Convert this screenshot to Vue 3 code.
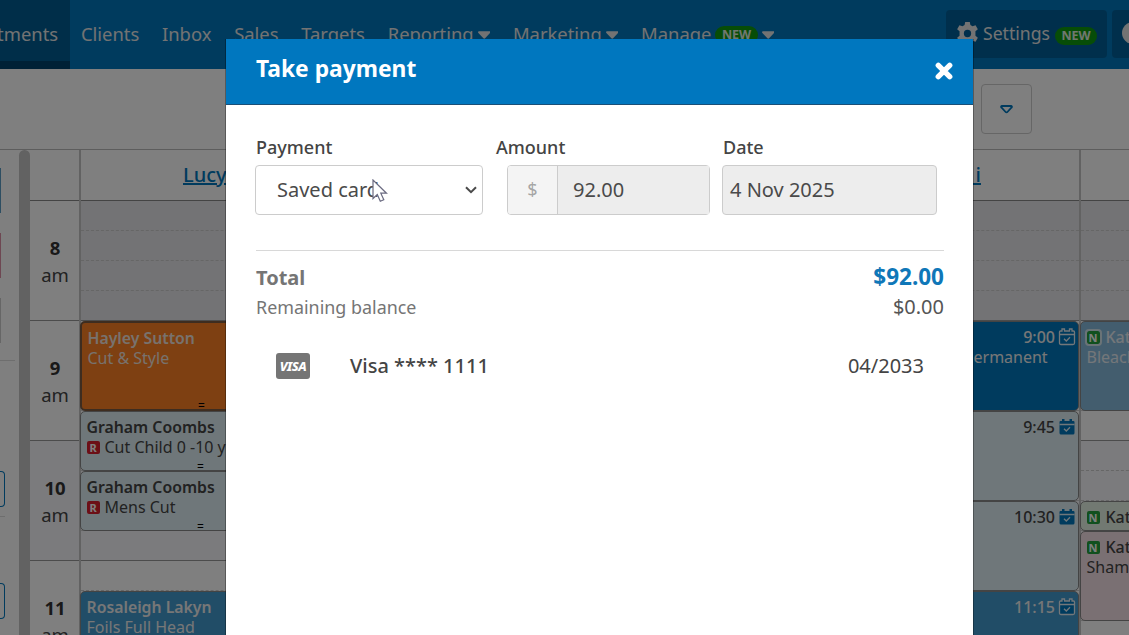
<!-- App.vue -->
<template>
  <div class="page">
    <!-- top navigation -->
    <header class="navbar">
      <nav class="menu">
        <a class="menu-item active"><span>Appointments</span></a>
        <a v-for="item in menu" :key="item.label" class="menu-item">
          <span>{{ item.label }}</span>
          <span v-if="item.isNew" class="badge">NEW</span>
          <svg v-if="item.caret" class="caret" viewBox="0 0 13 8">
            <path d="M1.2 0h10.6c1 0 1.5 1.1.8 1.9L7.4 7.4c-.5.6-1.3.6-1.8 0L.4 1.9C-.3 1.1.2 0 1.2 0z" fill="currentColor" />
          </svg>
        </a>
      </nav>
      <div class="nav-buttons">
        <a class="nav-button settings">
          <svg class="gear" viewBox="0 0 22 22">
            <path fill="currentColor" fill-rule="evenodd"
              d="M8.8 0h4.4l.6 2.9 2 1.2 2.9-1 2.200 3.800-2.300 2v4.200l2.300 2-2.200 3.800-2.900-1-2 1.200-.6 2.900H8.800l-.6-2.900-2-1.200-2.900 1-2.200-3.800 2.300-2V8.900l-2.300-2 2.200-3.800 2.900 1 2-1.200zM11 7.500a3.500 3.500 0 1 0 0 7 3.500 3.500 0 0 0 0-7z" />
          </svg>
          <span>Settings</span>
          <span class="badge">NEW</span>
        </a>
        <a class="nav-button help"><span class="circle"></span></a>
      </div>
    </header>

    <!-- toolbar -->
    <div class="toolbar">
      <button class="dropdown">
        <svg width="13" height="9" viewBox="0 0 13 9">
          <path d="M2 1h9c.9 0 1.2.9.6 1.5L7.4 7c-.5.6-1.3.6-1.8 0L1.4 2.5C.8 1.9 1.1 1 2 1z" fill="none"
            stroke="currentColor" stroke-width="1.8" />
        </svg>
      </button>
    </div>

    <!-- calendar -->
    <main class="calendar">
      <aside class="sidebar">
        <i class="edge blue"></i>
        <i class="edge pink"></i>
        <i class="edge grey"></i>
        <i class="rule"></i>
        <i class="side-button"></i>
        <i class="rule second"></i>
        <i class="side-button last"></i>
      </aside>
      <div class="scrollbar"></div>

      <section class="times">
        <div class="column-head"></div>
        <div v-for="hour in hours" :key="hour" class="hour" :class="{ shaded: hour === 10 }">
          <strong>{{ hour }}</strong>
          <span>am</span>
        </div>
      </section>

      <section v-for="col in columns" :key="col.id" class="column" :class="col.id">
        <div class="column-head"><a v-if="col.name">{{ col.name }}</a></div>
        <div class="slots">
          <div v-for="n in 16" :key="n" class="slot"
            :class="{ closed: n <= 4, shaded: n > 8 && n <= 12, full: n % 4 === 0 }" :style="{ gridRow: n }"></div>
          <article v-for="a in col.items" :key="a.row" class="appt" :class="a.color"
            :style="{ gridRow: a.row + ' / span ' + a.span }">
            <div class="line">
              <b v-if="a.tag" class="tag new" :class="{ outlined: a.outlined }">N</b>
              <strong v-if="a.client">{{ a.client }}</strong>
              <span v-if="a.time" class="time">{{ a.time }}</span>
              <svg v-if="a.time" class="cal-icon" :class="{ light: a.lightIcon }" viewBox="0 0 18 18">
                <path class="sheet" d="M2.500 3H4V1h2.500v2h5V1H14v2h1.500q1 0 1 1v11q0 1.500-1.500 1.500H3Q1.500 16.500 1.500 15V4q0-1 1-1z" />
                <path class="mark" d="M1.500 6.500h15M6 10.800l2.300 2.200 3.700-3.700" />
              </svg>
            </div>
            <div v-if="a.service" class="line service">
              <b v-if="a.repeat" class="tag repeat">R</b>
              <span>{{ a.service }}</span>
            </div>
            <span v-if="a.handle" class="handle">=</span>
          </article>
        </div>
      </section>
    </main>

    <!-- payment dialog -->
    <div class="overlay">
      <div class="modal">
        <div class="modal-head">
          <h1>Take payment</h1>
          <svg class="close" viewBox="0 0 18 18">
            <path d="M3.3 3.3l11.400 11.400M14.700 3.300L3.300 14.700" stroke="currentColor" stroke-width="5.400" stroke-linecap="round" />
          </svg>
        </div>
        <div class="modal-body">
          <div class="fields">
            <div class="field payment">
              <label>Payment</label>
              <div class="control select">
                <span>{{ payment.method }}</span>
                <svg width="12" height="8" viewBox="0 0 12 8">
                  <path d="M1 1.200l5 5 5-5" fill="none" stroke="currentColor" stroke-width="2" />
                </svg>
                <svg class="pointer" width="16" height="24" viewBox="0 0 16 24">
                  <path d="M1 1v18.500l4.300-4 3 6.800 3.500-1.600-3-6.500h5.700z" fill="#fff" stroke="#6a6a80" stroke-width="1.200" />
                </svg>
              </div>
            </div>
            <div class="field amount">
              <label>Amount</label>
              <div class="control group">
                <span class="prefix">$</span>
                <span class="value">{{ payment.amount }}</span>
              </div>
            </div>
            <div class="field date">
              <label>Date</label>
              <div class="control readonly">{{ payment.date }}</div>
            </div>
          </div>

          <div class="summary">
            <div class="row total"><span>Total</span><span class="sum">${{ payment.amount }}</span></div>
            <div class="row balance"><span>Remaining balance</span><span class="sum">$0.00</span></div>
          </div>

          <div class="card-row">
            <span class="visa">VISA</span>
            <span class="number">Visa **** 1111</span>
            <span class="expiry">04/2033</span>
          </div>
        </div>
      </div>
    </div>
  </div>
</template>

<script setup>
import { reactive } from 'vue'

const payment = reactive({ method: 'Saved card', amount: '92.00', date: '4 Nov 2025' })

const menu = [
  { label: 'Clients' },
  { label: 'Inbox' },
  { label: 'Sales' },
  { label: 'Targets' },
  { label: 'Reporting', caret: true },
  { label: 'Marketing', caret: true },
  { label: 'Manage', caret: true, isNew: true }
]

const hours = [8, 9, 10, 11]

/* one row = 15 minutes, row 1 = 8:00 */
const columns = [
  {
    id: 'first',
    name: 'Lucy',
    items: [
      { row: 5, span: 3, color: 'orange', client: 'Hayley Sutton', service: 'Cut & Style', handle: true },
      { row: 8, span: 2, color: 'pale', client: 'Graham Coombs', service: 'Cut Child 0 -10 y', repeat: true, handle: true },
      { row: 10, span: 2, color: 'pale', client: 'Graham Coombs', service: 'Mens Cut', repeat: true, handle: true },
      { row: 14, span: 3, color: 'sky', client: 'Rosaleigh Lakyn', service: 'Foils Full Head' }
    ]
  },
  { id: 'middle', items: [] },
  {
    id: 'third',
    name: '\u00a0\u00a0i',
    items: [
      { row: 5, span: 3, color: 'navy', time: '9:00', service: 'ermanent', lightIcon: true },
      { row: 8, span: 3, color: 'pale', time: '9:45' },
      { row: 11, span: 3, color: 'pale', time: '10:30' },
      { row: 14, span: 3, color: 'sky', time: '11:15', lightIcon: true }
    ]
  },
  {
    id: 'fourth',
    items: [
      { row: 5, span: 3, color: 'light-blue', client: 'Kat', service: 'Bleach', tag: true, outlined: true },
      { row: 11, span: 1, color: 'mint', client: 'Kat', tag: true },
      { row: 12, span: 3, color: 'rose', client: 'Kat', service: 'Sham', tag: true }
    ]
  }
]
</script>

<style>
body {
  margin: 0;
  overflow: hidden;
}
</style>

<style scoped>
* {
  box-sizing: border-box;
}

.page {
  width: 100vw;
  height: 100vh;
  overflow: hidden;
  background: #fff;
  color: #444;
  font-family: "Noto Sans", sans-serif;
}

/* Navigation */
.navbar {
  display: flex;
  height: 69px;
  background: #0077bd;
  color: #e6e6e6;
  font-size: 18.4px;
}

.menu {
  display: flex;
  flex: none;
  width: 946px;
}

.menu-item {
  display: flex;
  align-items: center;
  padding: 0 11.4px 2px;
  gap: 4px;
  white-space: nowrap;
}

.menu-item.active {
  width: 69.5px;
  justify-content: flex-end;
  background: #005c93;
  border-bottom: 8px solid #00436c;
  padding-top: 8px;
}

.caret {
  width: 12.5px;
  height: 8px;
  margin-top: 3px;
}

.badge {
  height: 18px;
  margin-top: 2px;
  padding: 0 6.5px;
  border-radius: 9px;
  background: #0f9a0f;
  color: #e0f0e0;
  font-size: 12.5px;
  font-weight: 700;
  line-height: 18px;
}

.nav-buttons {
  display: flex;
  flex: none;
  gap: 5px;
  padding-top: 10px;
}

.nav-button {
  display: flex;
  align-items: center;
  width: 161px;
  height: 48px;
  padding: 0 0 2px 10px;
  border-radius: 4px;
  background: #005f98;
  font-size: 17.6px;
}

.gear {
  width: 23px;
  height: 23px;
  margin-right: 4px;
}

.settings .badge {
  margin-top: 5px;
  margin-left: 5px;
}

.circle {
  width: 22px;
  height: 22px;
  border-radius: 50%;
  background: currentColor;
}

/* Toolbar */
.toolbar {
  height: 81px;
  padding: 15px 0 0 981px;
  border-bottom: 1px solid #bbb;
}

.dropdown {
  display: flex;
  align-items: center;
  justify-content: center;
  width: 51px;
  height: 50px;
  padding: 0;
  border: 1px solid #ccc;
  border-radius: 4px;
  background: #fff;
  color: #0077bd;
}

/* Calendar */
.calendar {
  display: flex;
  height: 485px;
  overflow: hidden;
}

.sidebar {
  width: 19px;
  flex: none;
}

.sidebar i {
  display: block;
}

.edge {
  width: 1px;
  height: 45px;
  margin-bottom: 20px;
}

.edge.blue {
  margin-top: 18px;
  background: #5b9cc4;
}

.edge.pink {
  background: #dc8fa5;
}

.edge.grey {
  background: #ccc;
  margin-bottom: 17px;
}

.rule {
  width: 15px;
  height: 1px;
  background: #ddd;
}

.side-button {
  width: 5px;
  height: 36px;
  margin-top: 110px;
  border: 1px solid #0077bd;
  border-left: 0;
  border-radius: 0 4px 4px 0;
}

.rule.second {
  width: 5px;
  margin-top: 9px;
}

.side-button.last {
  margin-top: 66px;
}

.scrollbar {
  width: 11px;
  flex: none;
  border-radius: 6px 6px 0 0;
  background: #c4c4c4;
}

.times {
  width: 49px;
  flex: none;
}

.column-head {
  height: 51px;
  border-bottom: 1px solid #888;
  font-size: 20px;
  font-weight: 500;
  line-height: 49px;
  white-space: nowrap;
}

.column-head a {
  color: #0077bd;
  text-decoration: underline;
}

.first .column-head {
  padding-left: 102px;
}

.third .column-head {
  padding-right: 98px;
  text-align: right;
}

.hour {
  display: flex;
  flex-direction: column;
  align-items: center;
  height: 120px;
  padding: 33px 0 0 1px;
  border-bottom: 1px solid #999;
  font-size: 18.5px;
  line-height: 28px;
}

.hour span {
  margin-top: -1px;
}

.hour strong {
  color: #333;
}

.column {
  flex: 0 0 334px;
  border-left: 2px solid #c4c4c4;
}

.column.middle {
  flex-basis: 332px;
}

.slots {
  display: grid;
  grid-template-columns: 100%;
  grid-template-rows: repeat(16, 30px);
}

.slot {
  grid-column: 1;
  border-bottom: 1px dashed #ccc;
}

.slot.closed {
  background: #e6e6ea;
}

.shaded {
  background: #f7f7fa;
}

.slot.full {
  border-bottom: 1px solid #999;
}

/* Appointments */
.appt {
  position: relative;
  z-index: 1;
  grid-column: 1;
  margin-left: -1px;
  padding: 5px 2px 0 5.5px;
  border: 1px solid #888;
  border-radius: 5px;
  font-size: 16px;
  line-height: 20px;
  white-space: nowrap;
  overflow: hidden;
}

.appt strong {
  font-size: 15.8px;
  font-weight: 600;
}

.line {
  display: flex;
  align-items: center;
  height: 20px;
}

.appt.orange {
  border: 2px solid #7d5a40;
  background: #fd8024;
  color: #f0e4dc;
}

.pale {
  background: #dfeff5;
}

.sky {
  background: #439ace;
  color: #eee;
}

.navy {
  background: #0077bd;
  color: #eee;
}

.light-blue {
  background: #87bbdd;
  color: #e8eef4;
}

.mint {
  background: #e4f2e4;
}

.rose {
  background: #f5e0e6;
}

.third .service {
  padding-left: 221px;
}

.fourth .appt strong {
  font-size: 16px;
  font-weight: 500;
}

.time {
  margin-left: auto;
  font-weight: 500;
}

.cal-icon {
  width: 18px;
  height: 18px;
  margin-left: 3px;
}

.sheet {
  fill: #0077bd;
}

.mark {
  fill: none;
  stroke: #dfeff5;
  stroke-width: 1.3;
}

.light .sheet {
  stroke: #e6eef4;
  stroke-width: 1.3;
}

.light .mark {
  stroke: #e6eef4;
}

.tag {
  display: inline-flex;
  align-items: center;
  justify-content: center;
  width: 13px;
  height: 13px;
  margin-right: 5px;
  border-radius: 2px;
  color: #fff;
  font-size: 11px;
  line-height: 13px;
}

.tag.new {
  background: #23a03c;
  margin-right: 6px;
}

.tag.outlined {
  outline: 2px solid #d4e6ee;
}

.tag.repeat {
  background: #d81f2c;
}

.handle {
  position: absolute;
  bottom: -4px;
  left: 116px;
  color: #000;
  font-size: 12px;
  line-height: 14px;
}

/* Dialog */
.overlay {
  position: fixed;
  inset: 0;
  z-index: 5;
  padding: 39px 0 0 225px;
  background: rgba(0, 0, 0, 0.5);
}

.modal {
  width: 749px;
  height: 620px;
  border: 1px solid rgba(0, 0, 0, 0.3);
  border-top: 0;
  background: #fff;
  background-clip: padding-box;
}

.modal-head {
  display: flex;
  align-items: center;
  justify-content: space-between;
  height: 66px;
  padding: 0 20.5px 0 30px;
  border-bottom: 1px solid #1a4f77;
  background: #0077bf;
  color: #fff;
}

.modal-head h1 {
  margin: 0 0 6px;
  font-size: 22.8px;
  font-weight: 700;
  line-height: 30px;
}

.close {
  width: 18px;
  height: 18px;
  margin-bottom: 2px;
}

.modal-body {
  padding: 28px 29px 0 30px;
}

.fields {
  display: flex;
}

.field label {
  display: block;
  height: 32px;
  padding-left: 1px;
  font-size: 18px;
  font-weight: 500;
  line-height: 28px;
}

.field.payment {
  width: 228px;
  margin-left: -1px;
}

.field.amount {
  width: 215px;
  margin-left: 12px;
}

.field.amount .control {
  margin-left: 12px;
}

.field.date {
  width: 215px;
  margin-left: 12px;
}

.control {
  display: flex;
  align-items: center;
  height: 50px;
  border: 1px solid #ccc;
  border-radius: 4px;
  color: #4a4a4a;
  font-size: 20px;
}

.select {
  position: relative;
  justify-content: space-between;
  padding: 0 5px 0 21px;
}

.select span {
  padding-bottom: 2px;
}

.pointer {
  position: absolute;
  left: 116px;
  top: 13px;
}

.prefix {
  width: 50px;
  height: 48px;
  border-right: 1px solid #ccc;
  border-radius: 3px 0 0 3px;
  background: #f4f4f4;
  color: #a5a5a5;
  font-size: 18px;
  line-height: 46px;
  text-align: center;
}

.value {
  flex: 1;
  height: 48px;
  padding-left: 15px;
  background: #ededed;
  line-height: 48px;
}

.readonly {
  padding: 0 0 2px 7px;
  background: #ededed;
}

.summary {
  margin-top: 35px;
  padding-top: 11px;
  border-top: 1px solid #d8d8d8;
}

.row {
  display: flex;
  justify-content: space-between;
  height: 30px;
  line-height: 30px;
  color: #757575;
}

.total {
  font-size: 20px;
  font-weight: 700;
}

.total span:first-child {
  padding-top: 1px;
}

.total .sum {
  color: #0f77b8;
  font-size: 22.5px;
}

.balance {
  font-size: 17.9px;
}

.balance .sum {
  color: #555;
  font-size: 20px;
}

.card-row {
  display: flex;
  align-items: center;
  height: 40px;
  margin-top: 24px;
  padding: 0 20px;
  font-size: 20px;
}

.visa {
  width: 34px;
  height: 26px;
  border-radius: 3px;
  background: #757575;
  color: #fff;
  font-size: 13px;
  font-style: italic;
  font-weight: 800;
  line-height: 26px;
  text-align: center;
  letter-spacing: -0.5px;
}

.number {
  margin-left: 40px;
  padding-bottom: 2px;
  font-weight: 500;
}

.expiry {
  margin-left: auto;
  padding-bottom: 2px;
}
</style>
